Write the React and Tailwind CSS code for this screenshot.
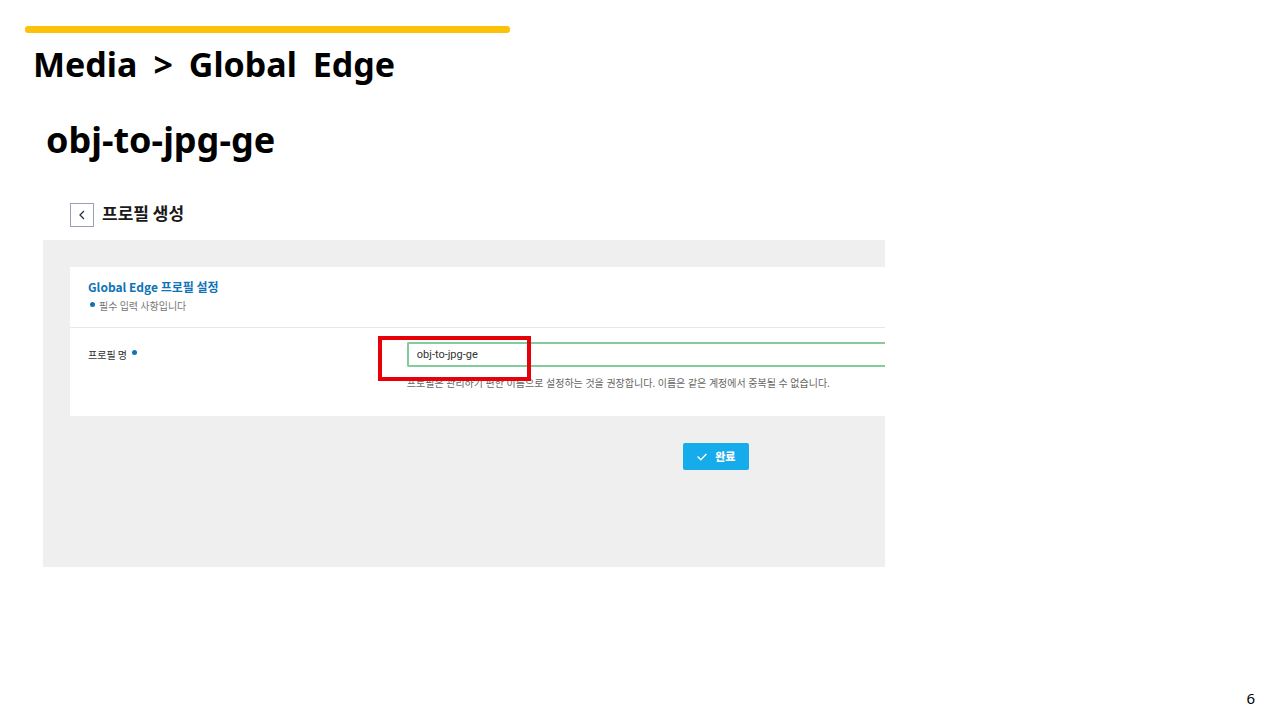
import React from 'react';

const Dot = () => (
  <span className="inline-block h-[5px] w-[5px] shrink-0 rounded-full bg-[#0f73b9]" aria-hidden="true" />
);

const SlideTitle = () => (
  <header className="pl-[25px] pt-[26px]">
    <div className="h-[7px] w-[38%] min-w-[485px] max-w-full rounded-[3px] bg-[#fcc108]" />
    <h1 className="ml-[8px] mt-[7px] flex gap-[16px] text-[34px] font-bold leading-[48px]">
      <span>Media</span>
      <span>&gt;</span>
      <span>Global</span>
      <span>Edge</span>
    </h1>
    <h2 className="ml-[21px] mt-[28px] text-[36px] font-bold leading-[48px]">obj-to-jpg-ge</h2>
  </header>
);

const ProfileForm = () => (
  <form
    className="bg-white"
    onSubmit={(e) => e.preventDefault()}
  >
    <div className="border-b border-[#e6e6e6] pb-[11px] pl-[18px] pt-[11px]">
      <h4 className="text-[12px] font-bold leading-[18px] text-[#0f73b9]">Global Edge 프로필 설정</h4>
      <p className="flex gap-[4px] pl-[2px] text-[10px] leading-[20px] text-[#777777]">
        <span className="pt-[6px] leading-[0]"><Dot /></span>
        필수 입력 사항입니다
      </p>
    </div>
    <div className="flex pb-[23px] pl-[18px] pt-[14px]">
      <label htmlFor="profile-name" className="flex w-[40%] shrink-0 gap-[5px] text-[10px] leading-[26px] text-[#333333]">
        프로필 명
        <span className="pt-[8px] leading-[0]"><Dot /></span>
      </label>
      <div className="relative min-w-0 flex-1">
        <input
          id="profile-name"
          type="text"
          defaultValue="obj-to-jpg-ge"
          className="block h-[25px] w-full rounded-l-[2px] border-2 border-r-0 border-[#84cb9c] bg-white pl-[8px] font-['Roboto',sans-serif] text-[11px] text-[#333333] outline-none"
        />
        <p className="mt-[6px] whitespace-nowrap font-['Noto_Sans','Noto_Sans_CJK_KR',sans-serif] text-[10px] leading-[20px] text-[#666666]">
          프로필은 관리하기 편한 이름으로 설정하는 것을 권장합니다. 이름은 같은 계정에서 중복될 수 없습니다.
        </p>
        <div className="pointer-events-none absolute -left-[29px] -top-[6px] h-[45px] w-[153px] border-4 border-[#e60008]" />
      </div>
    </div>
  </form>
);

const ConsolePanel = () => (
  <section className="ml-[43px] mt-[26px] w-[66%] max-w-[842px] font-['Noto_Sans_CJK_KR',sans-serif]">
    <div className="flex h-[50px] items-center gap-[8px] pl-[27px]">
      <button type="button" aria-label="Back" className="flex h-[24px] w-[24px] items-center justify-center border border-[#9a9fb8] bg-white">
        <svg width="10" height="12" viewBox="0 0 10 12" fill="none" stroke="#2c3146" strokeWidth="1.3">
          <path d="M7 2 3 6l4 4" />
        </svg>
      </button>
      <h3 className="pb-[4px] text-[17px] font-bold leading-[24px] text-[#1a1a1a]">프로필 생성</h3>
    </div>
    <div className="bg-[#efefef] pb-[97px] pl-[27px] pt-[27px]">
      <ProfileForm />
      <div className="flex pl-[75%] pt-[27px]">
        <button type="button" className="ml-[2px] flex h-[27px] w-[66px] items-center justify-center gap-[8px] rounded-[2px] bg-[#16aceb] text-[11px] font-extrabold text-white">
          <svg width="10" height="8" viewBox="0 0 10 8" fill="none" stroke="currentColor" strokeWidth="1.4">
            <path d="M.6 3.6 3.8 6.8 9.4 1" />
          </svg>
          완료
        </button>
      </div>
    </div>
  </section>
);

export default function App() {
  return (
    <main className="flex min-h-screen flex-col bg-white font-['Noto_Sans','Noto_Sans_CJK_KR',sans-serif] text-black">
      <SlideTitle />
      <ConsolePanel />
      <footer className="mt-auto pb-[12px] pr-[25px] text-right text-[15px] leading-[20px]">6</footer>
    </main>
  );
}
